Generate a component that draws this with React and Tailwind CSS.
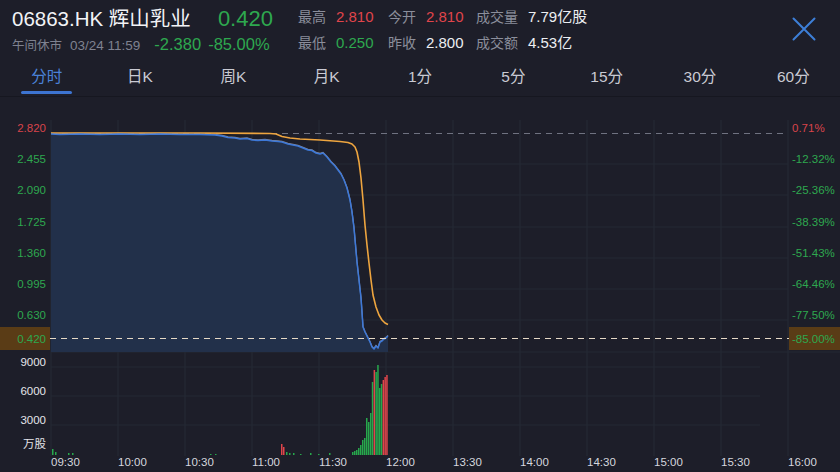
import React from 'react';

const FONT = { fontFamily: '"Liberation Sans", "Noto Sans CJK SC", sans-serif' };

const blue = [
  [51,134],[60,134.5],[80,134],[100,134.5],[120,134],[140,134.5],[160,134],[180,134.5],[200,134.5],[215,135],[222,136],[228,137.5],[235,138],[240,139],[247,138.5],[252,140],[258,140.5],[265,140],[272,141],[278,141.5],[282,142],[288,144],[293,145],[298,146],[303,148],[308,150],[312,150.5],[316,153],[320,154],[323,153],[327,157],[331,162],[335,166],[338,170],[341,174],[344,180],[347,188],[350,200],[352,212],[354,228],[355.5,245],[357,262],[359,280],[361,298],[362,312],[363,327],[365,332],[368,338],[370,342],[372,347],[374,349],[376,346],[378,348],[380,342],[382,341],[384,339],[386,338],[388,336],
];

const orange = [
  [51,133],[100,133],[200,133],[270,133.5],[276,134],[282,136.5],[290,138],[300,139],[320,140],[340,141.5],[348,142.5],[352,144],[355,147],[357,152],[359,162],[361,178],[363,200],[365,225],[367,245],[369,263],[371,280],[373,295],[376,307],[379,315],[382,320],[385,323],[388,324.5],
];

// [x, top, color]
const bars = [
  [52,449,'g'],[55,452,'g'],[68,453,'g'],[72,453,'g'],[210,454,'g'],[215,454,'g'],
  [281,444,'r'],[283,447,'r'],[286,452,'g'],[289,453,'g'],[293,453,'g'],[300,454,'g'],[310,453,'g'],[318,454,'g'],[329,453,'g'],
  [352,452,'g'],[354,451,'g'],[356,450,'g'],[358,448,'g'],[360,445,'g'],[362,440,'g'],[364,438,'g'],[366,418,'g'],[368,422,'g'],[370,413,'g'],
  [371.8,382,'g'],[373.6,370,'r'],[375.4,372,'g'],[377.2,365,'g'],[379,388,'g'],[380.8,384,'g'],[382.6,380,'r'],[384.4,377,'r'],[386.2,375,'r'],
];

const pts = (a) => a.map(p => p.join(',')).join(' ');

const leftLabels = [
  ['2.820', 133, '#d9444b'], ['2.455', 164, '#2ea84f'], ['2.090', 195, '#2ea84f'], ['1.725', 227, '#2ea84f'],
  ['1.360', 258, '#2ea84f'], ['0.995', 289, '#2ea84f'], ['0.630', 320, '#2ea84f'],
];
const rightLabels = [
  ['0.71%', 133, '#d9444b'], ['-12.32%', 164, '#2ea84f'], ['-25.36%', 195, '#2ea84f'], ['-38.39%', 227, '#2ea84f'],
  ['-51.43%', 258, '#2ea84f'], ['-64.46%', 289, '#2ea84f'], ['-77.50%', 320, '#2ea84f'],
];
const times = ['09:30','10:00','10:30','11:00','11:30','12:00','13:30','14:00','14:30','15:00','15:30','16:00'];

function Chart() {
  const vx = Array.from({ length: 12 }, (_, i) => 51 + i * 67);
  const hy = [164, 195, 227, 258, 289, 320];
  return (
    <svg width="840" height="375" viewBox="0 97 840 375" className="block" style={FONT}>
      {vx.map(x => <line key={x} x1={x} y1="120" x2={x} y2="456" stroke="#272a37" strokeWidth="1" />)}
      {hy.map(y => <line key={y} x1="51" y1={y} x2="788" y2={y} stroke="#252835" strokeWidth="1" />)}
      {[367, 396, 425].map(y => <line key={y} x1="51" y1={y} x2="760" y2={y} stroke="#252835" strokeWidth="1" />)}
      <line x1="51" y1="352" x2="840" y2="352" stroke="#252835" />
      <polygon points={pts([...blue, [388,352],[51,352]])} fill="#22304a" />
      <line x1="51" y1="133.5" x2="788" y2="133.5" stroke="#6f7280" strokeWidth="1" strokeDasharray="6 5" />
      <polyline points={pts(blue)} fill="none" stroke="#c9ccd6" strokeWidth="1.2" opacity="0.6" transform="translate(0,-0.6)" />
      <polyline points={pts(orange)} fill="none" stroke="#eea53f" strokeWidth="1.6" strokeLinejoin="round" />
      <polyline points={pts(blue)} fill="none" stroke="#3d78d8" strokeWidth="1.5" strokeLinejoin="round" />
      <rect x="0" y="327" width="50" height="23" fill="#5a3c16" />
      <rect x="789" y="327" width="51" height="23" fill="#5a3c16" />
      <line x1="50" y1="338.5" x2="789" y2="338.5" stroke="#e6d9c6" strokeWidth="1.2" strokeDasharray="6 5" />
      {bars.map(([x, t, c], i) => (
        <rect key={i} x={x} y={t} width="1.5" height={455 - t} fill={c === 'r' ? '#e0454b' : '#27a84c'} />
      ))}
      {leftLabels.map(([t, y, c]) => (
        <text key={t} x="46" y={y - 1} textAnchor="end" fontSize="11.5" fill={c}>{t}</text>
      ))}
      <text x="46" y="343" textAnchor="end" fontSize="11.5" fill="#2ea84f">0.420</text>
      {rightLabels.map(([t, y, c]) => (
        <text key={t} x="792" y={y - 1} fontSize="11.5" fill={c}>{t}</text>
      ))}
      <text x="792" y="343" fontSize="11.5" fill="#2ea84f">-85.00%</text>
      {[['9000', 366], ['6000', 395], ['3000', 424]].map(([t, y]) => (
        <text key={t} x="46" y={y} textAnchor="end" fontSize="11.5" fill="#e4e5ea">{t}</text>
      ))}
      <text x="46" y="448" textAnchor="end" fontSize="11.5" fill="#e4e5ea">万股</text>
      {times.map((t, i) => (
        <text key={t} x={51 + i * 67} y="466" fontSize="11.5" fill="#d6d7de">{t}</text>
      ))}
    </svg>
  );
}

function Stat({ label, value, color, w }) {
  return (
    <div className={`flex items-baseline ${w}`}>
      <span className="text-[14px] text-[#8b8e9b] mr-[10px]">{label}</span>
      <span className={`text-[15px] ${color}`}>{value}</span>
    </div>
  );
}

export default function App() {
  const tabs = ['分时', '日K', '周K', '月K', '1分', '5分', '15分', '30分', '60分'];
  return (
    <div className="w-[840px] h-[472px] overflow-hidden bg-[#1d1e29] text-white" style={FONT}>
      <div className="h-[58px] flex pl-[12px] relative">
        <div className="w-[286px] flex flex-col">
          <div className="flex items-baseline h-[31px] pt-[2px]">
            <span className="text-[20.5px] text-[#f2f3f6]">06863.HK 辉山乳业</span>
            <span className="text-[22px] text-[#2ea84f] ml-[27px]">0.420</span>
          </div>
          <div className="flex items-baseline mt-[1px]">
            <span className="text-[12.5px] text-[#7f8290]">午间休市</span>
            <span className="text-[13.5px] text-[#7f8290] ml-[8px]">03/24 11:59</span>
            <span className="text-[16.5px] text-[#2ea84f] ml-[14px]">-2.380</span>
            <span className="text-[16.5px] text-[#2ea84f] ml-[7px]">-85.00%</span>
          </div>
        </div>
        <div className="flex flex-col">
          <div className="flex h-[31px] items-center pt-[4px]">
            <Stat label="最高" value="2.810" color="text-[#e0454b]" w="w-[90px]" />
            <Stat label="今开" value="2.810" color="text-[#e0454b]" w="w-[88px]" />
            <Stat label="成交量" value="7.79亿股" color="text-[#eceef2]" w="w-[130px]" />
          </div>
          <div className="flex items-center mt-[1px]">
            <Stat label="最低" value="0.250" color="text-[#2ea84f]" w="w-[90px]" />
            <Stat label="昨收" value="2.800" color="text-[#eceef2]" w="w-[88px]" />
            <Stat label="成交额" value="4.53亿" color="text-[#eceef2]" w="w-[130px]" />
          </div>
        </div>
        <div className="ml-auto mr-[24px] mt-[17px]">
          <svg width="24" height="24" viewBox="0 0 24 24">
            <path d="M1.5 1.5 L22.5 22.5 M22.5 1.5 L1.5 22.5" stroke="#3d7fd8" strokeWidth="2" strokeLinecap="round" />
          </svg>
        </div>
      </div>
      <div className="h-[39px] grid grid-cols-9 border-b border-[#161720]">
        {tabs.map((t, i) => (
          <div key={t} className="flex flex-col items-center justify-center relative">
            <span className={`text-[15.5px] ${i === 0 ? 'text-[#4a82d8]' : 'text-[#c9cad3]'}`}>{t}</span>
            {i === 0 && <div className="absolute bottom-[2px] w-[51px] h-[3px] rounded-full bg-[#3d74d1]" />}
          </div>
        ))}
      </div>
      <Chart />
    </div>
  );
}
